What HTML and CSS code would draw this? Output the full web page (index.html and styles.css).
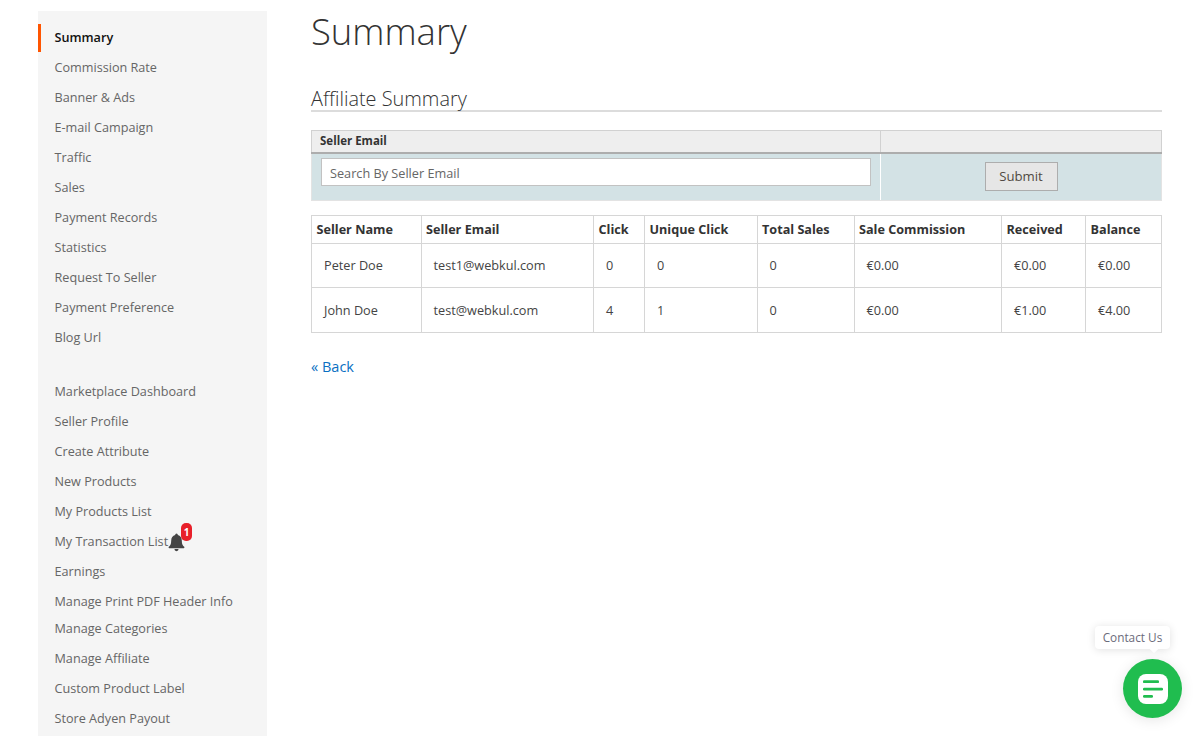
FILE: index.html
```html
<!DOCTYPE html>
<html lang="en">
<head>
<meta charset="utf-8">
<title>Summary</title>
<link rel="stylesheet" href="styles.css">
</head>
<body>
<div class="page">
  <nav class="sidebar">
    <ul class="menu menu-first">
      <li class="active">Summary</li>
      <li>Commission Rate</li>
      <li>Banner &amp; Ads</li>
      <li>E-mail Campaign</li>
      <li>Traffic</li>
      <li>Sales</li>
      <li>Payment Records</li>
      <li>Statistics</li>
      <li>Request To Seller</li>
      <li>Payment Preference</li>
      <li>Blog Url</li>
    </ul>
    <ul class="menu menu-second">
      <li>Marketplace Dashboard</li>
      <li>Seller Profile</li>
      <li>Create Attribute</li>
      <li>New Products</li>
      <li>My Products List</li>
      <li class="has-bell">My Transaction List<span class="bell-wrap"><svg class="bell" viewBox="0 0 18 20" aria-hidden="true"><path d="M9 0.5a1.5 1.5 0 0 0-1.4 1.6C4.9 2.8 3.4 5 3.4 7.8c0 4-1.2 5.4-2.6 6.8-.5.6-.2 1.4.6 1.4h15.2c.8 0 1.1-.8.6-1.4-1.400-1.400-2.600-2.800-2.600-6.800 0-2.800-1.500-5-4.200-5.700A1.500 1.500 0 0 0 9 .5zM6.800 17a2.200 2.200 0 0 0 4.400 0z"/></svg><span class="badge">1</span></span></li>
      <li>Earnings</li>
      <li class="short">Manage Print PDF Header Info</li>
      <li>Manage Categories</li>
      <li>Manage Affiliate</li>
      <li>Custom Product Label</li>
      <li>Store Adyen Payout</li>
    </ul>
  </nav>
  <main class="content">
    <h1 class="page-title">Summary</h1>
    <h2 class="section-title">Affiliate Summary</h2>
    <table class="filter">
      <colgroup><col class="f1"><col></colgroup>
      <thead><tr><th>Seller Email</th><th></th></tr></thead>
      <tbody>
        <tr>
          <td><input class="search" type="text" placeholder="Search By Seller Email"></td>
          <td class="submit-cell"><button class="submit" type="button">Submit</button></td>
        </tr>
      </tbody>
    </table>
    <table class="data">
      <colgroup>
        <col class="c1"><col class="c2"><col class="c3"><col class="c4"><col class="c5"><col class="c6"><col class="c7"><col class="c8">
      </colgroup>
      <thead>
        <tr><th>Seller Name</th><th>Seller Email</th><th>Click</th><th>Unique Click</th><th>Total Sales</th><th>Sale Commission</th><th>Received</th><th>Balance</th></tr>
      </thead>
      <tbody>
        <tr class="row-a"><td>Peter Doe</td><td>test1@webkul.com</td><td>0</td><td>0</td><td>0</td><td>€0.00</td><td>€0.00</td><td>€0.00</td></tr>
        <tr class="row-b"><td>John Doe</td><td>test@webkul.com</td><td>4</td><td>1</td><td>0</td><td>€0.00</td><td>€1.00</td><td>€4.00</td></tr>
      </tbody>
    </table>
    <a class="back" href="#">« Back</a>
  </main>
</div>
<div class="chat">
  <div class="chat-tip">Contact Us</div>
  <div class="chat-btn">
    <svg viewBox="0 0 30 30" class="chat-icon" aria-hidden="true">
      <rect x="0" y="0" width="30" height="30" rx="8" fill="#fff"/>
      <rect x="5" y="6.300" width="16" height="2.800" rx="1.200" fill="#20bd4f"/>
      <rect x="5" y="13.700" width="20" height="2.800" rx="1.200" fill="#20bd4f"/>
      <rect x="5" y="21" width="10" height="2.800" rx="1.200" fill="#20bd4f"/>
    </svg>
  </div>
</div>
</body>
</html>
```
FILE: styles.css
```css
html, body {
  margin: 0;
  padding: 0;
  height: 736px;
  overflow: hidden;
  background: #fff;
}
body {
  font-family: "Open Sans", "Liberation Sans", sans-serif;
  font-size: 14px;
  color: #333;
}
.page {
  display: flex;
  align-items: flex-start;
  padding-left: 38px;
}
.sidebar {
  width: 229px;
  flex: none;
  margin-top: 11px;
  padding-top: 11px;
  padding-bottom: 40px;
  background: #f5f5f5;
}
.menu {
  list-style: none;
  margin: 0;
  padding: 0;
}
.menu-second {
  margin-top: 24px;
}
.menu li {
  height: 30px;
  line-height: 30px;
  padding-left: 16.500px;
  font-size: 12.650px;
  color: #666;
  white-space: nowrap;
}
.menu li.short {
  height: 27px;
}
.menu li.active {
  color: #111;
  font-weight: 600;
  border-left: 3px solid #ff5501;
  padding-left: 13.500px;
  height: 28px;
  line-height: 27px;
  margin-top: 2px;
}
.bell-wrap {
  position: relative;
  display: inline-block;
  vertical-align: middle;
  width: 17px;
  height: 19px;
}
.bell {
  width: 17px;
  height: 19px;
  fill: #444;
  display: block;
}
.badge {
  position: absolute;
  left: 13px;
  top: -10px;
  width: 11px;
  height: 18px;
  border-radius: 5px;
  background: #e8202a;
  color: #fff;
  font-size: 10px;
  font-weight: 700;
  line-height: 18px;
  text-align: center;
}
.content {
  width: 851px;
  flex: none;
  margin-left: 44px;
}
.page-title {
  margin: 8px 0 0;
  font-size: 36.400px;
  font-weight: 300;
  line-height: 46px;
  color: #333;
}
.section-title {
  margin: 30px 0 0;
  height: 25px;
  font-size: 19.900px;
  font-weight: 300;
  line-height: 30px;
  color: #333;
  border-bottom: 2px solid #dcdcdc;
  padding-bottom: 1px;
}
table {
  width: 851px;
  border-collapse: collapse;
  table-layout: fixed;
}
.filter {
  margin-top: 18px;
}
.f1 {
  width: 569px;
}
.filter th {
  height: 22px;
  padding: 0 8px 1px;
  background: #eee;
  border: 1px solid #d1d1d1;
  border-bottom: 2px solid #adadad;
  font-size: 11.500px;
  font-weight: 700;
  text-align: left;
  color: #333;
  box-sizing: border-box;
}
.filter td {
  height: 48px;
  padding: 4px 9px 14px;
  background: #d3e2e5;
  border-left: 1px solid #e3e3e3;
  border-bottom: 1px solid #e3e3e3;
  box-sizing: border-box;
  vertical-align: top;
}
.filter td + td {
  border-left: 1px solid #fff;
  border-right: 1px solid #e3e3e3;
}
.search {
  display: block;
  width: 100%;
  height: 28px;
  box-sizing: border-box;
  padding: 2px 8px 0;
  border: 1px solid #c2c2c2;
  background: #fff;
  font-family: inherit;
  font-size: 12.700px;
  color: #555;
  outline: none;
}
.search::placeholder {
  color: #666;
  opacity: 1;
}
.submit-cell {
  text-align: center;
}
.filter td.submit-cell {
  padding-top: 8px;
  padding-bottom: 0;
}
.submit {
  width: 73px;
  height: 29px;
  padding: 0;
  background: #e6e6e6;
  border: 1px solid #adadad;
  font-family: inherit;
  font-size: 13.200px;
  font-weight: 500;
  color: #514943;
}
.data {
  width: 850px;
  margin-top: 14px;
}
.c1 { width: 109.500px; }
.c2 { width: 172.500px; }
.c3 { width: 51px; }
.c4 { width: 112.500px; }
.c5 { width: 97px; }
.c6 { width: 147.500px; }
.c7 { width: 84px; }
.c8 { width: 75.500px; }
.data th, .data td {
  border: 1px solid #d6d6d6;
  box-sizing: border-box;
  text-align: left;
  white-space: nowrap;
}
.data th {
  height: 28px;
  padding: 0 4.500px 2px;
  font-size: 12.650px;
  font-weight: 700;
  color: #333;
}
.data td {
  padding: 0 12px;
  font-size: 12.700px;
  color: #444;
}
.row-a td {
  height: 44px;
  padding-bottom: 1px;
}
.row-b td {
  height: 45px;
}
.back {
  display: inline-block;
  margin-top: 24px;
  font-size: 14.500px;
  line-height: 20px;
  color: #0a6fc2;
  text-decoration: none;
}
.chat-tip {
  position: absolute;
  left: 1095px;
  top: 626px;
  width: 75px;
  height: 23px;
  background: #fff;
  border-radius: 4px;
  box-shadow: 0 1px 8px rgba(0,0,0,.12);
  font-size: 11.800px;
  line-height: 23px;
  text-align: center;
  color: #6b6b7b;
}
.chat-tip::after {
  content: "";
  position: absolute;
  left: 56px;
  bottom: -3px;
  width: 6px;
  height: 6px;
  background: #fff;
  transform: rotate(45deg);
}
.chat-btn {
  position: absolute;
  left: 1123px;
  top: 659px;
  width: 59px;
  height: 59px;
  border-radius: 50%;
  background: #20bd4f;
  box-shadow: 0 2px 14px rgba(0,0,0,.1);
  display: flex;
  align-items: center;
  justify-content: center;
}
.chat-icon {
  width: 30px;
  height: 30px;
  display: block;
}
```
